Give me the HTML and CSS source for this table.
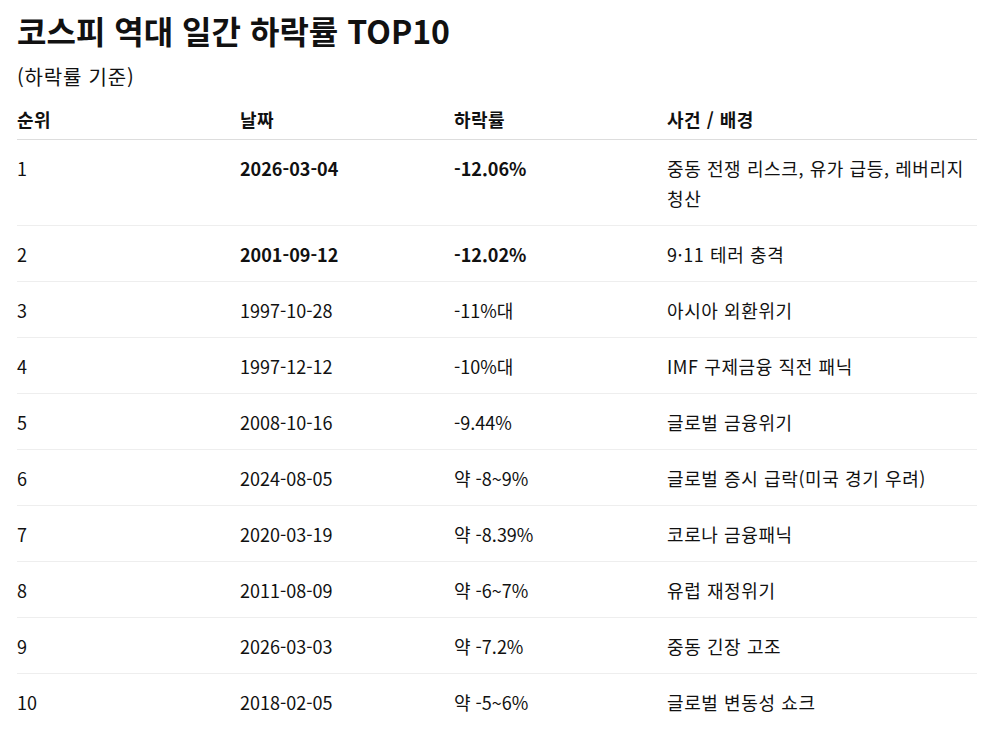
FILE: index.html
```html
<!DOCTYPE html>
<html lang="ko">
<head>
<meta charset="utf-8">
<title>코스피 역대 일간 하락률 TOP10</title>
<link rel="stylesheet" href="styles.css">
</head>
<body>
<main class="page">
  <h1 class="title">코스피 역대 일간 하락률 TOP10</h1>
  <p class="subtitle">(하락률 기준)</p>
  <table class="ranking">
    <colgroup>
      <col class="c-rank"><col class="c-date"><col class="c-rate"><col class="c-event">
    </colgroup>
    <thead>
      <tr><th>순위</th><th>날짜</th><th>하락률</th><th>사건 / 배경</th></tr>
    </thead>
    <tbody>
      <tr><td>1</td><td class="strong">2026-03-04</td><td class="strong">-12.06%</td><td class="event">중동 전쟁 리스크, 유가 급등, 레버리지 청산</td></tr>
      <tr><td>2</td><td class="strong">2001-09-12</td><td class="strong">-12.02%</td><td class="event">9·11 테러 충격</td></tr>
      <tr><td>3</td><td>1997-10-28</td><td>-11%대</td><td class="event">아시아 외환위기</td></tr>
      <tr><td>4</td><td>1997-12-12</td><td>-10%대</td><td class="event">IMF 구제금융 직전 패닉</td></tr>
      <tr><td>5</td><td>2008-10-16</td><td>-9.44%</td><td class="event">글로벌 금융위기</td></tr>
      <tr><td>6</td><td>2024-08-05</td><td>약 -8~9%</td><td class="event">글로벌 증시 급락(미국 경기 우려)</td></tr>
      <tr><td>7</td><td>2020-03-19</td><td>약 -8.39%</td><td class="event">코로나 금융패닉</td></tr>
      <tr><td>8</td><td>2011-08-09</td><td>약 -6~7%</td><td class="event">유럽 재정위기</td></tr>
      <tr><td>9</td><td>2026-03-03</td><td>약 -7.2%</td><td class="event">중동 긴장 고조</td></tr>
      <tr><td>10</td><td>2018-02-05</td><td>약 -5~6%</td><td class="event">글로벌 변동성 쇼크</td></tr>
    </tbody>
  </table>
</main>
</body>
</html>
```

FILE: styles.css
```css
html, body {
  margin: 0;
  padding: 0;
  background: #ffffff;
}

body {
  font-family: "Noto Sans CJK KR", "Noto Sans", sans-serif;
  color: #111111;
  font-size: 18px;
}

.page {
  padding: 11px 0 0 17px;
  width: 960px;
}

.title {
  margin: 0;
  font-size: 32px;
  font-weight: 700;
  line-height: 38px;
}

.subtitle {
  margin: 13px 0 0;
  font-size: 20px;
  line-height: 30px;
  letter-spacing: 0.8px;
}

.ranking {
  width: 960px;
  margin: 0;
  border-collapse: collapse;
  table-layout: fixed;
}

.c-rank { width: 223px; }
.c-date { width: 214px; }
.c-rate { width: 213px; }
.c-event { width: 310px; }

.ranking th {
  text-align: left;
  font-weight: 700;
  font-size: 18px;
  line-height: 30px;
  letter-spacing: 0.5px;
  padding: 12px 0 5px;
  border-bottom: 1px solid #dddddd;
}

.ranking td {
  font-size: 18px;
  line-height: 30px;
  padding: 13px 4px 12px 0;
  border-bottom: 1px solid #eeeeee;
  vertical-align: top;
}

.ranking td.event {
  letter-spacing: 0.6px;
}

.ranking tbody tr:last-child td {
  border-bottom: none;
}

.ranking td.strong {
  font-weight: 700;
}
```
